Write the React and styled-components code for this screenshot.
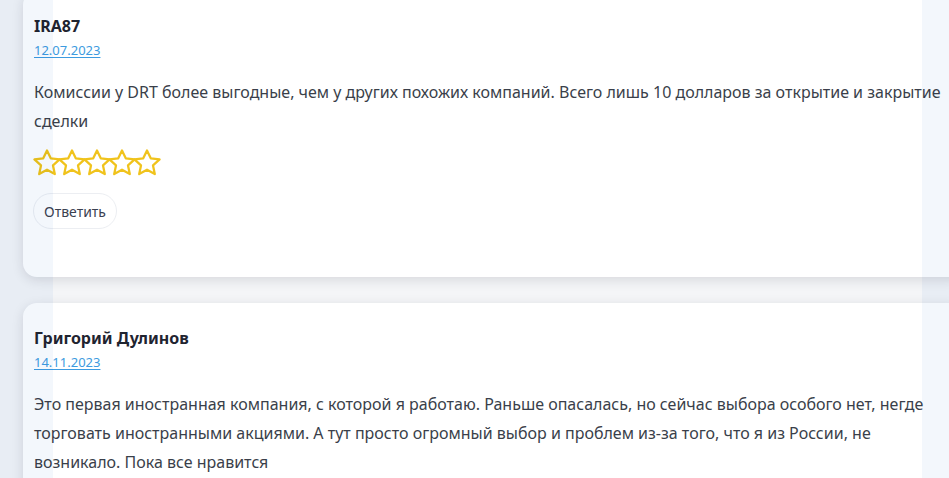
import styled, { createGlobalStyle } from "styled-components";

const GlobalStyle = createGlobalStyle`
  html, body {
    margin: 0;
    padding: 0;
    background: #f4f5f7;
    overflow: hidden;
  }
  body {
    font-family: "Noto Sans", "Open Sans", sans-serif;
  }
`;

const Page = styled.div`
  height: 478px;
  overflow: hidden;
  padding-left: 23px;
`;

const List = styled.div`
  display: flex;
  flex-direction: column;
  gap: 26px;
  margin-top: -9px;
`;

const Card = styled.div`
  width: 943px;
  box-sizing: border-box;
  background: #fff;
  border-radius: 14px;
  box-shadow: 0 3px 12px rgba(20, 30, 50, 0.13);
  padding: 23px 12px 48px 11px;
`;

const Name = styled.div`
  font-size: 16px;
  line-height: 24px;
  font-weight: 700;
  color: #1f2430;
`;

const DateLink = styled.a`
  display: inline-block;
  margin-top: 2px;
  font-size: 13px;
  line-height: 20px;
  color: #3d9be0;
  text-decoration: underline;
  text-underline-offset: 2px;
`;

const Text = styled.p`
  margin: 18px 0 0;
  font-size: 16px;
  line-height: 29px;
  color: #3a3f4a;
`;

const Stars = styled.div`
  display: flex;
  margin-top: 9px;
  margin-left: -5px;
  height: 36px;
`;

const Star = styled.svg`
  width: 36px;
  height: 36px;
  margin-right: -11px;
`;

const ReplyButton = styled.button`
  display: block;
  margin-top: 12px;
  margin-left: -1px;
  height: 36px;
  padding: 0 10px;
  border: 1px solid #eceef2;
  border-radius: 18px;
  background: #fff;
  font-family: inherit;
  font-size: 14px;
  color: #3b4150;
`;

const Fade = styled.div`
  position: fixed;
  top: 0;
  bottom: 0;
  ${(p) => (p.side === "left" ? "left: 0; width: 53px;" : "right: 0; width: 27px;")}
  background: #f3f7fc;
  mix-blend-mode: multiply;
  pointer-events: none;
`;

function StarIcon() {
  return (
    <Star viewBox="0 0 24 24">
      <path
        d="M12 3.6l2.5 5.3 5.9.7-4.4 4 1.2 5.8L12 16.5l-5.2 2.9 1.2-5.8-4.4-4 5.9-.7z"
        fill="none"
        stroke="#f0c31c"
        strokeWidth="1.5"
        strokeLinejoin="round"
      />
    </Star>
  );
}

const reviews = [
  {
    name: "IRA87",
    date: "12.07.2023",
    text: "Комиссии у DRT более выгодные, чем у других похожих компаний. Всего лишь 10 долларов за открытие и закрытие сделки",
  },
  {
    name: "Григорий Дулинов",
    date: "14.11.2023",
    text: "Это первая иностранная компания, с которой я работаю. Раньше опасалась, но сейчас выбора особого нет, негде торговать иностранными акциями. А тут просто огромный выбор и проблем из-за того, что я из России, не возникало. Пока все нравится",
  },
];

export default function App() {
  return (
    <>
      <GlobalStyle />
      <Page>
        <List>
          {reviews.map((r) => (
            <Card key={r.name}>
              <Name>{r.name}</Name>
              <DateLink href="#">{r.date}</DateLink>
              <Text>{r.text}</Text>
              <Stars>
                {[0, 1, 2, 3, 4].map((i) => (
                  <StarIcon key={i} />
                ))}
              </Stars>
              <ReplyButton>Ответить</ReplyButton>
            </Card>
          ))}
        </List>
      </Page>
      <Fade side="left" />
      <Fade side="right" />
    </>
  );
}
